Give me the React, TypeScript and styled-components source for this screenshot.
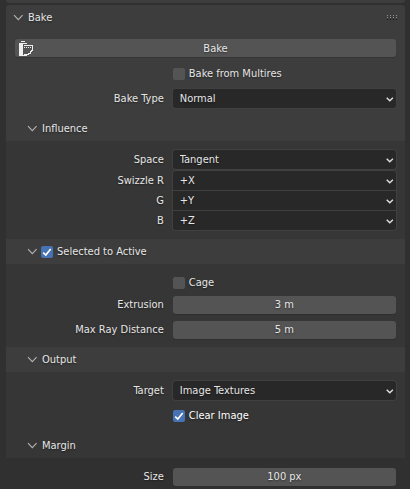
import React, { useId, useState } from "react";
import styled, { createGlobalStyle, css } from "styled-components";

const GlobalStyle = createGlobalStyle`
  *, *::before, *::after { box-sizing: border-box; }
  body {
    margin: 0;
    background: #303030;
    color: #e6e6e6;
    font: 11px/18px "DejaVu Sans Condensed", "DejaVu Sans", sans-serif;
    text-shadow: 0 1px 2px rgba(0, 0, 0, 0.45);
  }
  button, input, select { font: inherit; color: inherit; text-shadow: inherit; }
`;

const Editor = styled.main`
  display: flex;
  flex-direction: column;
  gap: 2px;
  min-height: 100vh;
  padding: 0 5px 0 6px;
  overflow: hidden;
`;

const PreviousPanel = styled.div`
  height: 3px;
  border-radius: 0 0 3px 3px;
  background: #3d3d3d;
`;

const Panel = styled.section`
  border-radius: 3px 3px 0 0;
  background: #3d3d3d;
`;

const depthColors = ["#3d3d3d", "#363636", "#303030"];

const PanelHeader = styled.header<{ $nested?: boolean }>`
  display: flex;
  align-items: center;
  height: 25px;
  padding: 1px 7px 0 ${(p) => (p.$nested ? 20 : 6)}px;
`;

const Subpanel = styled.section<{ $depth: number }>`
  background: ${(p) => depthColors[p.$depth - 1]};
`;

const Body = styled.div<{ $depth: number }>`
  display: flex;
  flex-direction: column;
  gap: 7px;
  padding: 9px;
  background: ${(p) => depthColors[p.$depth]};
`;

const Stack = styled.div<{ $gap: number }>`
  display: flex;
  flex-direction: column;
  gap: ${(p) => p.$gap}px;
`;

const Title = styled.h2`
  margin: 0;
  font: inherit;
`;

const Disclosure = styled.button`
  display: flex;
  align-items: center;
  gap: 4px;
  padding: 0;
  border: 0;
  background: none;
  line-height: 20px;
`;

const Grip = styled.svg`
  margin-left: auto;
`;

const ActionButton = styled.button`
  display: grid;
  grid-template-columns: 20px 1fr;
  align-items: center;
  height: 18px;
  padding: 0;
  border: 0;
  border-radius: 3px;
  background: #545454;
  box-shadow: 0 1px 0 #353535;
  line-height: 20px;
`;

const Row = styled.div<{ $height?: number }>`
  display: grid;
  grid-template-columns: minmax(0, 2fr) minmax(0, 3fr);
  column-gap: 9px;
  align-items: center;
  height: ${(p) => p.$height ?? 18}px;
`;

const FieldLabel = styled.label`
  padding-top: 1px;
  text-align: right;
  white-space: nowrap;
`;

const CheckLabel = styled.label<{ $column?: boolean; $bright?: boolean }>`
  display: flex;
  align-items: center;
  gap: 4px;
  grid-column: ${(p) => (p.$column ? 2 : "auto")};
  line-height: 20px;
  white-space: nowrap;
  ${(p) => p.$bright && css`color: #ffffff;`}
`;

const CheckFace = styled.span`
  display: grid;
  width: 12px;
  height: 12px;
`;

const CheckInput = styled.input`
  grid-area: 1 / 1;
  width: 12px;
  height: 12px;
  margin: 0;
  appearance: none;
  border-radius: 2px;
  background: #545454;
  &:checked { background: #4772b3; }
`;

const Tick = styled.svg`
  grid-area: 1 / 1;
  z-index: 1;
  pointer-events: none;
`;

const SelectFace = styled.div`
  display: grid;
  align-items: center;
  height: 100%;
`;

type Edge = "single" | "top" | "middle" | "bottom";
const radii: Record<Edge, string> = {
  single: "3px",
  top: "3px 3px 0 0",
  middle: "0",
  bottom: "0 0 3px 3px",
};

const SelectInput = styled.select<{ $edge: Edge }>`
  grid-area: 1 / 1;
  width: 100%;
  height: 100%;
  padding: 1px 20px 0 7px;
  appearance: none;
  border: 0;
  border-radius: ${(p) => radii[p.$edge]};
  background: #282828;
  box-shadow: 0 0 0 1px #404040;
`;

const SelectArrow = styled.svg`
  grid-area: 1 / 1;
  justify-self: end;
  margin-right: 1px;
  pointer-events: none;
`;

const NumberInput = styled.input`
  width: 100%;
  height: 18px;
  padding: 0;
  border: 0;
  border-radius: 3px;
  background: #545454;
  box-shadow: 0 1px 0 #2e2e2e;
  text-align: center;
`;

const Chevron = () => (
  <svg width="12" height="12" viewBox="0 0 12 12" fill="none" stroke="#b4b4b4" strokeWidth="1.1">
    <path d="M2 3.2 6.3 7.7 10.6 3.2" />
  </svg>
);

const BakeIcon = () => (
  <svg width="20" height="18" viewBox="0 0 20 18" fill="#eeeeee" shapeRendering="crispEdges">
    <path d="M6 1h4v1H6zM4 3h8v1H4zM4 4h4v11h4v1H4z" />
    <path d="M9 5h9v6h-1v1h-1v2h-2v1h-5v-1h4v-1h2v-2h1v-1h1V6H9z" />
    <path d="M9 7h1v1H9zM11 7h1v1h-1zM13 7h1v1h-1zM15 7h1v1h-1z" />
  </svg>
);

function Check({ label, checked = false, column, bright }: {
  label: string; checked?: boolean; column?: boolean; bright?: boolean;
}) {
  const [on, setOn] = useState(checked);
  return (
    <CheckLabel $column={column} $bright={bright}>
      <CheckFace>
        <CheckInput type="checkbox" checked={on} onChange={() => setOn(!on)} />
        {on && (
          <Tick width="12" height="12" viewBox="0 0 12 12" fill="none" stroke="#ffffff" strokeWidth="1.7">
            <path d="M2.2 6.6 4.8 9 9.7 3" />
          </Tick>
        )}
      </CheckFace>
      {label}
    </CheckLabel>
  );
}

function SelectRow({ label, options, edge = "single", height }: {
  label: string; options: string[]; edge?: Edge; height?: number;
}) {
  const id = useId();
  return (
    <Row $height={height}>
      <FieldLabel htmlFor={id}>{label}</FieldLabel>
      <SelectFace>
        <SelectInput id={id} $edge={edge}>
          {options.map((o) => <option key={o}>{o}</option>)}
        </SelectInput>
        <SelectArrow width="10" height="10" viewBox="0 0 10 10" fill="none" stroke="#e0e0e0" strokeWidth="1.4">
          <path d="M1.7 3.7 4.8 6.8 7.9 3.7" />
        </SelectArrow>
      </SelectFace>
    </Row>
  );
}

function NumberRow({ label, value }: { label: string; value: string }) {
  const id = useId();
  return (
    <Row>
      <FieldLabel htmlFor={id}>{label}</FieldLabel>
      <NumberInput id={id} type="text" defaultValue={value} />
    </Row>
  );
}

const ToggleSlot = styled.div`
  margin-left: 3px;
`;

function Section({ title, depth, toggle, children }: {
  title: string; depth: number; toggle?: boolean; children: React.ReactNode;
}) {
  const [open, setOpen] = useState(true);
  return (
    <Subpanel $depth={depth}>
      <PanelHeader $nested>
        <Title>
          <Disclosure aria-expanded={open} aria-label={title} onClick={() => setOpen(!open)}>
            <Chevron />
            {!toggle && title}
          </Disclosure>
        </Title>
        {toggle && <ToggleSlot><Check label={title} checked /></ToggleSlot>}
      </PanelHeader>
      {open && <Body $depth={depth}>{children}</Body>}
    </Subpanel>
  );
}

const axes = ["+X", "+Y", "+Z", "-X", "-Y", "-Z"];
const startingWith = (axis: string) => [axis, ...axes.filter((a) => a !== axis)];

export default function App() {
  const [open, setOpen] = useState(true);
  return (
    <>
      <GlobalStyle />
      <Editor>
        <PreviousPanel />
        <Panel>
          <PanelHeader>
            <Title>
              <Disclosure aria-expanded={open} onClick={() => setOpen(!open)}>
                <Chevron />
                Bake
              </Disclosure>
            </Title>
            <Grip width="11" height="6" viewBox="0 0 11 6" shapeRendering="crispEdges">
              {[0, 3, 6, 9].map((x) => [0, 2, 4].map((y) => (
                <rect key={`${x}-${y}`} x={x} y={y} width="1" height="1" fill={y === 4 ? "#1c1c1c" : "#929292"} />
              )))}
            </Grip>
          </PanelHeader>
          {open && (
            <>
              <Body $depth={0}>
                <ActionButton>
                  <BakeIcon />
                  Bake
                </ActionButton>
                <Row><Check label="Bake from Multires" column /></Row>
                <SelectRow label="Bake Type" options={["Normal", "Combined", "Diffuse"]} />
              </Body>
              <Section title="Influence" depth={1}>
                <Stack $gap={3}>
                  <SelectRow label="Space" options={["Tangent", "Object"]} />
                  <Stack $gap={1}>
                    <SelectRow label="Swizzle R" options={startingWith("+X")} edge="top" height={19} />
                    <SelectRow label="G" options={startingWith("+Y")} edge="middle" height={19} />
                    <SelectRow label="B" options={startingWith("+Z")} edge="bottom" height={19} />
                  </Stack>
                </Stack>
              </Section>
              <Section title="Selected to Active" depth={1} toggle>
                <Stack $gap={4}>
                  <Row><Check label="Cage" column /></Row>
                  <NumberRow label="Extrusion" value="3 m" />
                </Stack>
                <NumberRow label="Max Ray Distance" value="5 m" />
              </Section>
              <Section title="Output" depth={1}>
                <SelectRow label="Target" options={["Image Textures", "Active Color Attribute"]} />
                <Row><Check label="Clear Image" checked column bright /></Row>
              </Section>
              <Section title="Margin" depth={2}>
                <NumberRow label="Size" value="100 px" />
              </Section>
            </>
          )}
        </Panel>
      </Editor>
    </>
  );
}
